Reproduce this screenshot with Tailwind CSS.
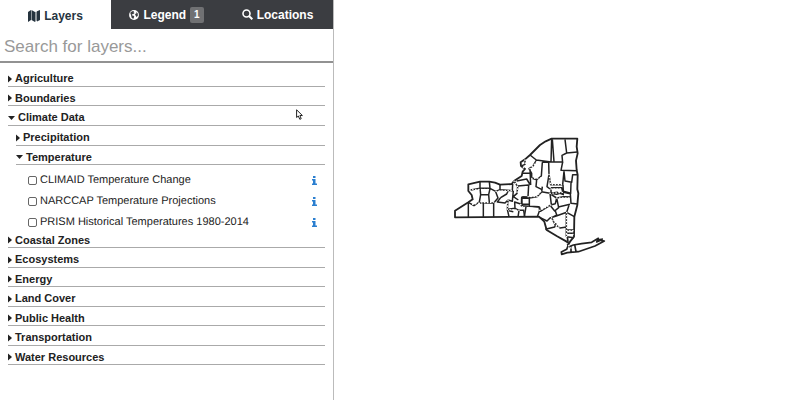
<!DOCTYPE html>
<html lang="en">
<head>
<meta charset="utf-8">
<meta name="viewport" content="width=device-width, initial-scale=1">
<title>Map layers</title>
<script src="https://cdn.jsdelivr.net/npm/@tailwindcss/browser@4"></script>
</head>
<body class="relative flex min-h-screen bg-white font-['Liberation_Sans',Arial,sans-serif] text-[11px] text-[#222] [text-rendering:geometricPrecision]">
<svg class="hidden">
  <symbol id="right" viewBox="0 0 4 8"><path d="M0 0.5 4 4 0 7.5z" fill="#222"/></symbol>
  <symbol id="down" viewBox="0 0 7 4"><path d="M0 0h7L3.500 4z" fill="#222"/></symbol>
  <symbol id="info" viewBox="0 0 5 9"><path d="M1 0h2.500v2H1zM0 3h3.500v4.500H5V9H0V7.500h1v-3H0z" fill="#2b7fd0"/></symbol>
</svg>
<aside class="w-[334px] shrink-0 border-r border-[#bbb]">
  <nav class="grid h-[29px] grid-cols-3 text-xs font-bold text-white">
    <button class="flex items-center justify-center gap-1 bg-white pt-0.5 text-[#26343f]">
      <svg class="h-3 w-3" viewBox="0 0 12 12" fill="#26343f"><path d="M0 2 3 0v10L0 12zM3.500 0 7 2v10L3.500 10zM7.500 2 8.500 1.500v9L7.500 12zM9 1.300 12 0v10L9 11.500z"/></svg>
      Layers</button>
    <button class="flex items-center justify-center gap-1 bg-[#3b3d41]">
      <svg class="h-[10px] w-[10px]" viewBox="0 0 10 10"><circle cx="5" cy="5" r="4.900" fill="#fff"/><path d="M1.200 2.800 3 1.300 5 1l-.5 1.300L5.600 3 4 4.200 2.800 4.300l.4 1.200 1.400.3.700 1L4.200 9 2.500 7.500 2.200 5.800zM7 1.800l1.700 1.500.2 2.200-1.400 1.700-.5-1.500L6 5l.5-1.300 1.100-.5z" fill="#3b3d41"/></svg>
      Legend
      <span class="rounded-xs bg-[#707173] px-1 text-[10px] leading-4">1</span></button>
    <button class="flex items-center justify-center gap-1 bg-[#3b3d41]">
      <svg class="h-[11px] w-[11px]" viewBox="0 0 11 11" fill="none" stroke="#fff" stroke-width="1.600"><circle cx="4.500" cy="4.500" r="3.500"/><path d="m7 7 3.300 3.300" stroke-width="2"/></svg>
      Locations</button>
  </nav>
  <input type="search" aria-label="Search for layers" placeholder="Search for layers..." class="block h-[34px] w-full border-b-2 border-[#929292] px-1 pt-1 text-[17px] text-[#555] outline-none placeholder:text-[#999]">
  <ul class="pt-1 pr-2 pl-2 font-bold">
    <li><button class="flex h-5 w-[317px] items-center gap-[3px] border-b border-[#aaa] pt-1"><svg class="h-2 w-1"><use href="#right"/></svg>Agriculture</button></li>
    <li><button class="flex h-[19px] w-[317px] items-center gap-[3px] border-b border-[#aaa] pt-1"><svg class="h-2 w-1"><use href="#right"/></svg>Boundaries</button></li>
    <li><button class="flex h-5 w-[317px] items-center gap-[3px] border-b border-[#aaa] pt-1"><svg class="h-1 w-[7px]"><use href="#down"/></svg>Climate Data</button>
      <ul class="w-[317px] pl-2">
        <li><button class="flex h-5 w-full items-center gap-[3px] border-b border-[#aaa] pt-1"><svg class="h-2 w-1"><use href="#right"/></svg>Precipitation</button></li>
        <li><button class="flex h-[19px] w-full items-center gap-[3px] border-b border-[#aaa] pt-1"><svg class="h-1 w-[7px]"><use href="#down"/></svg>Temperature</button>
          <ul class="pr-2 pb-px pl-3 font-normal leading-3">
            <li class="flex h-[21px] justify-between pt-[9px]"><label class="flex h-3 items-center gap-[3px]"><input type="checkbox" class="h-[9px] w-[9px] appearance-none rounded-xs border border-[#666]">CLIMAID Temperature Change</label><button class="h-3" aria-label="About CLIMAID Temperature Change"><svg class="h-[9px] w-[5px]"><use href="#info"/></svg></button></li>
            <li class="flex h-[21px] justify-between pt-[9px]"><label class="flex h-3 items-center gap-[3px]"><input type="checkbox" class="h-[9px] w-[9px] appearance-none rounded-xs border border-[#666]">NARCCAP Temperature Projections</label><button class="h-3" aria-label="About NARCCAP Temperature Projections"><svg class="h-[9px] w-[5px]"><use href="#info"/></svg></button></li>
            <li class="flex h-[21px] justify-between pt-[9px]"><label class="flex h-3 items-center gap-[3px]"><input type="checkbox" class="h-[9px] w-[9px] appearance-none rounded-xs border border-[#666]">PRISM Historical Temperatures 1980-2014</label><button class="h-3" aria-label="About PRISM Historical Temperatures"><svg class="h-[9px] w-[5px]"><use href="#info"/></svg></button></li>
          </ul>
        </li>
      </ul>
    </li>
    <li><button class="flex h-[19px] w-[317px] items-center gap-[3px] border-b border-[#aaa] pt-1"><svg class="h-2 w-1"><use href="#right"/></svg>Coastal Zones</button></li>
    <li><button class="flex h-5 w-[317px] items-center gap-[3px] border-b border-[#aaa] pt-1"><svg class="h-2 w-1"><use href="#right"/></svg>Ecosystems</button></li>
    <li><button class="flex h-[19px] w-[317px] items-center gap-[3px] border-b border-[#aaa] pt-1"><svg class="h-2 w-1"><use href="#right"/></svg>Energy</button></li>
    <li><button class="flex h-5 w-[317px] items-center gap-[3px] border-b border-[#aaa] pt-1"><svg class="h-2 w-1"><use href="#right"/></svg>Land Cover</button></li>
    <li><button class="flex h-[19px] w-[317px] items-center gap-[3px] border-b border-[#aaa] pt-1"><svg class="h-2 w-1"><use href="#right"/></svg>Public Health</button></li>
    <li><button class="flex h-5 w-[317px] items-center gap-[3px] border-b border-[#aaa] pt-1"><svg class="h-2 w-1"><use href="#right"/></svg>Transportation</button></li>
    <li><button class="flex h-[19px] w-[317px] items-center gap-[3px] border-b border-[#aaa] pt-1"><svg class="h-2 w-1"><use href="#right"/></svg>Water Resources</button></li>
  </ul>
</aside>
<main class="relative flex-1" aria-label="Map">
  <svg class="absolute top-[130px] left-[116px] h-[130px] w-40" viewBox="0 0 480 390" fill="none" stroke="#222" stroke-linejoin="round" role="img" aria-label="New York State counties">
    <path stroke-width="5.500" d="M15 262V242L55 217 68 208 65 195 55 183V163L90 155H118L135 158 150 164 185 162 193 152 215 138 218 125 225 117 213 108 212 97 225 88 240 75 270 45 287 34 305 26H382L380 50 383 70 378 92 380 120 383 135 382 178 385 190 382 225 373 260 372 320 360 335 354 345 350 335 320 318 290 300 283 275 267 260Z"/>
    <path stroke-width="5" d="M352 320 355 345 350 358 334 366 335 373 352 368 385 365 435 348 463 333 452 331 440 336 445 325 425 337 395 341 370 345 357 350M363 346V365M374 344 378 365M440 330 459 327"/>
    <g stroke-width="4.500">
      <path d="M55 217V262M100 218V262M131 218V262M55 217 72 227 88 216 92 194 90 173V155M62 180 90 175H120M118 155 120 175 137 184 150 179V164M92 194H116L120 176M116 194 118 217M90 219H131L144 204 137 185M150 179 187 182 188 162M152 203 170 192 175 182M152 203 142 216 165 219 174 210 187 214 190 182M174 210 172 238 195 235 194 216 212 222 220 231M172 238 177 260M195 235 207 241 204 261M207 241H221L224 261M177 242 190 245M192 153 203 170 201 190 190 200 205 210M203 168 236 165 234 200 215 202 216 222 238 223M234 200 240 205"/>
      <path d="M240 75 259 90 303 96 305 26M307 28 312 95M345 28 350 69 336 76 338 99M350 69 382 66M303 96H338L333 121 380 122M225 90 225 103 216 107M259 91 249 108 237 116 245 130V143L260 149 274 138 277 97M218 130H240M240 116 242 165M242 143 260 149 258 170 276 179M276 97H296L297 133 291 170 300 177M297 133 302 164H338L342 124M342 124 345 153 365 157 368 134 382 134M303 173H335L340 194 322 187 303 190V173M200 153 230 147 241 165M339 164 340 184 362 190 363 159"/>
      <path d="M217 200 238 204V229L267 230 269 241 262 260M238 204 261 200 275 186 277 170M239 229 269 232 271 244 304 224 300 190 274 185M215 203 214 227 236 229M304 224 316 221 320 204 304 194M300 190 320 193 340 187 361 191 363 220 383 222M320 204 326 233 314 243 302 228M325 231 360 223M320 204 340 200 363 201M316 243 321 257 350 247 357 226M321 257 300 264 291 273 269 262M350 247 373 260M318 256 305 263 314 282 330 294 350 291M349 248V320M286 298 314 291 318 280M350 300H371M350 310H371M350 320 371 323M228 230 223 260M235 205H217"/>
    </g>
    <path stroke="#fff" stroke-width="4" stroke-linecap="round" stroke-dasharray="1 8" d="M68 178H116M68 223 88 219 139 216M138 184 188 181M212 223 221 235M225 90 227 110 216 115M240 116 261 95M245 145 272 144M297 133 302 164H338M303 177H335M320 204H361M269 241 304 224M350 247V320M350 302H371M350 313H371M350 340 366 357M174 210 172 238 207 241M192 153 203 170 201 190M234 200 261 200 276 179M305 263 314 282 330 294M300 190 340 187"/>
  </svg>
</main>
<svg class="absolute top-[109px] left-[296px] h-[11px] w-[7px]" viewBox="0 0 7 11" aria-hidden="true"><path d="M.6.8v7.700L2.300 7l1.500 3.300 1.400-.6L3.900 6.500h2.500z" fill="#fff" stroke="#222"/></svg>
</body>
</html>
